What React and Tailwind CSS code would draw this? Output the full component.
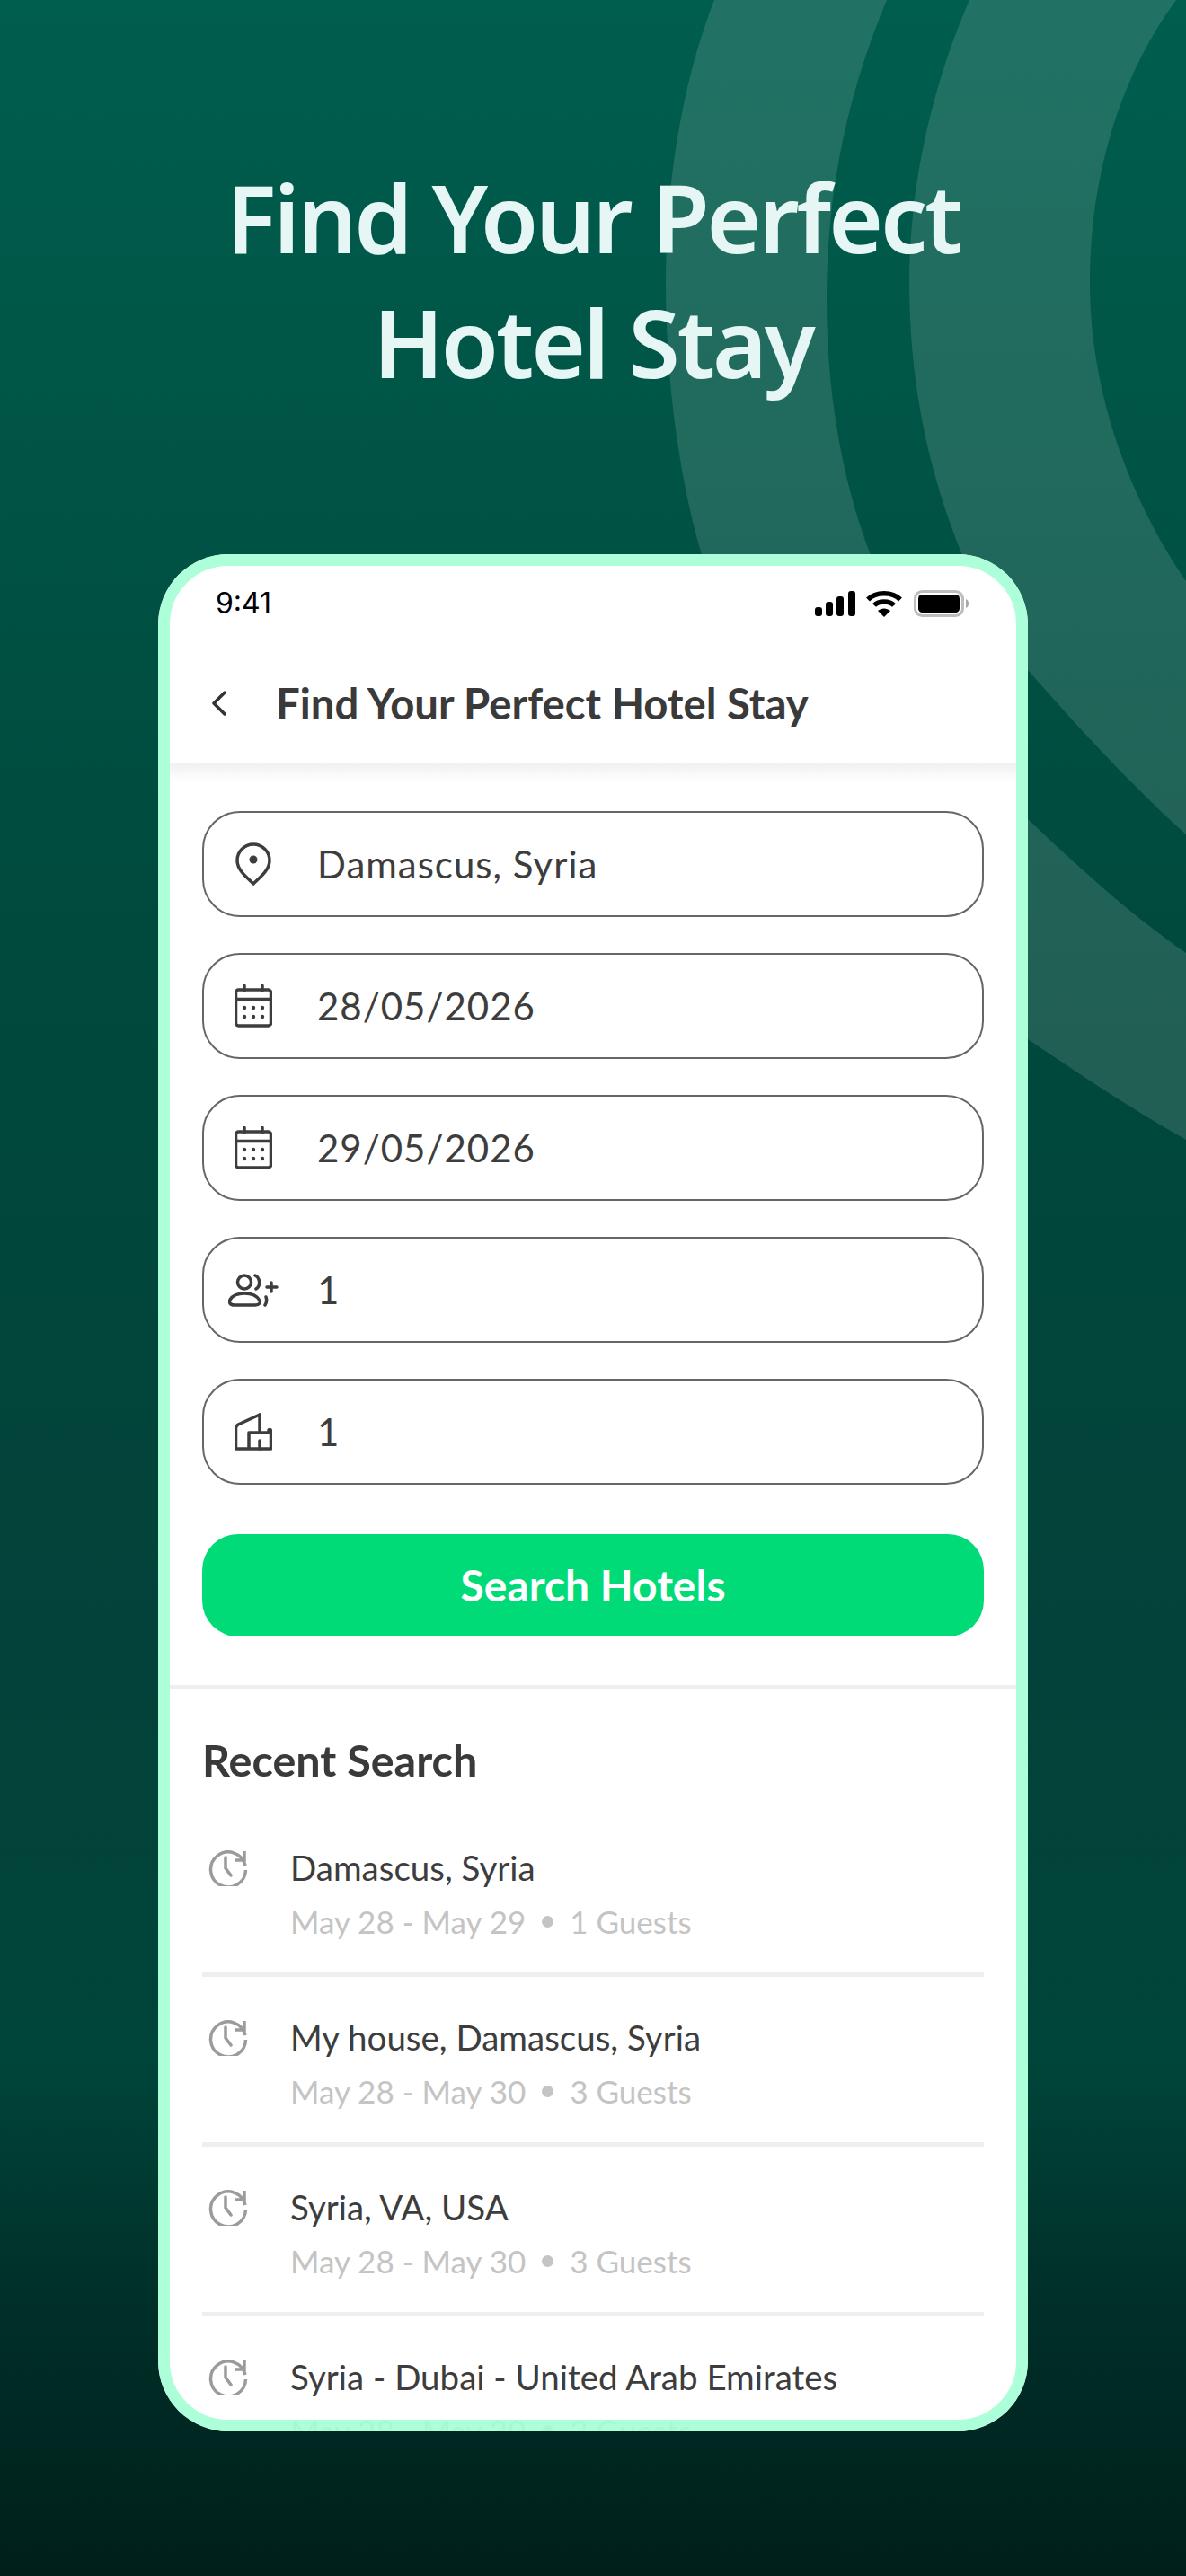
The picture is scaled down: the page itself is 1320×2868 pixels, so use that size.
const fields = [
  { icon: "pin", value: "Damascus, Syria" },
  { icon: "calendar", value: "28/05/2026" },
  { icon: "calendar", value: "29/05/2026" },
  { icon: "guests", value: "1" },
  { icon: "rooms", value: "1" },
];

const recent = [
  { title: "Damascus, Syria", dates: "May 28 - May 29", guests: "1 Guests" },
  { title: "My house, Damascus, Syria", dates: "May 28 - May 30", guests: "3 Guests" },
  { title: "Syria, VA, USA", dates: "May 28 - May 30", guests: "3 Guests" },
  { title: "Syria - Dubai - United Arab Emirates", dates: "May 28 - May 30", guests: "3 Guests" },
];

function FieldIcon({ type }) {
  if (type === "pin") {
    return (
      <svg width="40" height="48" viewBox="0 0 40 48" fill="none" stroke="#3d3d3d" strokeWidth="3.5">
        <path d="M20 46 C13 39 2 31 2 20 A18 18 0 0 1 38 20 C38 31 27 39 20 46 Z" strokeLinejoin="round" />
        <circle cx="20" cy="19" r="4.5" fill="#3d3d3d" stroke="none" />
      </svg>
    );
  }
  if (type === "calendar") {
    return (
      <svg width="42" height="48" viewBox="0 0 42 48" fill="none" stroke="#3d3d3d" strokeWidth="3.5" strokeLinecap="round">
        <rect x="1.5" y="6" width="39" height="40" rx="3" />
        <path d="M1.5 16.5 H40.5 M11 1.5 V7 M31 1.5 V7" />
        <g fill="#3d3d3d" stroke="none">
          <circle cx="11" cy="26" r="2.2" />
          <circle cx="21" cy="26" r="2.2" />
          <circle cx="31" cy="26" r="2.2" />
          <circle cx="11" cy="36" r="2.2" />
          <circle cx="21" cy="36" r="2.2" />
          <circle cx="31" cy="36" r="2.2" />
        </g>
      </svg>
    );
  }
  if (type === "guests") {
    return (
      <svg width="56" height="37" viewBox="0 0 56 37" fill="none" stroke="#3d3d3d" strokeWidth="3.5" strokeLinecap="round">
        <circle cx="18" cy="9.5" r="7.5" />
        <path d="M7 35 H30 C35 35 36 32 35 30 C32 24 25 22 18 22 C11 22 5 24 2 29 C0.5 32 2 35 7 35 Z" />
        <path d="M30 2 C36 5 36 14 31 17 M42 26 C43 29 43 32 41 35" />
        <path d="M48 10 V20 M43 15 H54" />
      </svg>
    );
  }
  return (
    <svg width="42" height="42" viewBox="0 0 42 42" fill="none" stroke="#3d3d3d" strokeWidth="3.5" strokeLinejoin="round" strokeLinecap="round">
      <path d="M28 2 L4 13 C2.5 14 1.5 15 1.5 17 V40 H40.5 V20 C40.5 18 38 18 38 20 V22 H16 V40" />
      <path d="M28 2 V21 M28 40 V31" />
    </svg>
  );
}

function HistoryIcon() {
  return (
    <svg width="44" height="42" viewBox="0 0 44 42" fill="none" stroke="#9b9b9b" strokeWidth="3.5">
      <path d="M41 19 A19.5 19.5 0 1 0 41.5 24 M40 3 V13 H30" />
      <path d="M21 12 V24 L27 32" strokeLinecap="round" transform="translate(-2 -2)" />
    </svg>
  );
}

function StatusIcons() {
  return (
    <div className="flex items-center">
      <svg width="45" height="28" viewBox="0 0 45 28" fill="#000">
        <rect x="0" y="18" width="8" height="10" rx="3" />
        <rect x="12" y="12" width="8" height="16" rx="3" />
        <rect x="24" y="6" width="8" height="22" rx="3" />
        <rect x="37" y="0" width="8" height="28" rx="3" />
      </svg>
      <svg className="ml-[12px]" width="40" height="30" viewBox="0 0 40 30" fill="none" stroke="#000" strokeWidth="5.5">
        <path d="M2 10.5 C11 1.5 29 1.5 38 10.5" />
        <path d="M9 17 C14 11.5 26 11.5 31 17" />
        <path d="M20 30 L13 23 C17 19.5 23 19.5 27 23 Z" fill="#000" stroke="none" />
      </svg>
      <svg className="ml-[13px]" width="62" height="30" viewBox="0 0 62 30">
        <rect x="1.5" y="1.5" width="53" height="27" rx="8" fill="none" stroke="#bdbdbd" strokeWidth="3" />
        <rect x="5" y="5" width="46" height="20" rx="4.5" fill="#000" />
        <path d="M58 10 C62 11 62 19 58 20 Z" fill="#a8a8a8" />
      </svg>
    </div>
  );
}

function App() {
  return (
    <div className="relative h-[2868px] w-[1320px] overflow-hidden bg-[linear-gradient(180deg,#005e4e_0%,#00493c_38%,#03423a_64%,#004539_80%,#00302a_89%,#001f1a_100%)] font-['Lato',sans-serif]">
      {/* Background rings */}
      <svg className="absolute inset-0" width="1320" height="2868" viewBox="0 0 1320 2868" fill="#ffffff" fillOpacity="0.13">
        <path d="M795 0 C760 90 741 200 741 315 C741 420 755 530 781 618 C850 860 1000 1070 1144 1157 C1200 1195 1260 1235 1320 1269 L1320 1061 C1260 1020 1200 965 1144 912 C1050 830 1000 730 969 618 C935 530 920 430 920 332 C920 210 945 100 987 0 Z" />
        <path d="M1079 0 C1040 90 1012 200 1012 315 C1012 430 1035 530 1071 618 C1095 665 1120 710 1144 746 C1200 810 1260 875 1320 929 L1320 647 C1260 560 1213 440 1213 315 C1213 190 1250 80 1309 0 Z" />
      </svg>

      <div className="relative flex flex-col items-center pt-[172px]">
        <h1 className="text-center font-['Noto_Sans',sans-serif] text-[104px] leading-[139px] font-semibold tracking-[-3px] text-[#e6f6f5]">
          Find Your Perfect
          <br />
          Hotel Stay
        </h1>

        {/* Phone frame: sits over the screen, so the last row shows faintly through it */}
        <div className="relative mt-[167px] h-[2090px] w-[968px] overflow-hidden rounded-[78px] bg-white p-[13px]">
          <div className="flex h-full flex-col">
            <div className="flex h-[84px] shrink-0 items-center justify-between pr-[52px] pl-[51px]">
              <span className="font-['Inter',sans-serif] text-[32px] text-black">9:41</span>
              <StatusIcons />
            </div>

            <div className="flex h-[135px] shrink-0 items-center pt-[3px] pl-[46px]">
              <svg width="18" height="28" viewBox="0 0 18 28" fill="none" stroke="#333" strokeWidth="3.5" strokeLinecap="round" strokeLinejoin="round">
                <path d="M15 2 L3 14 L15 26" />
              </svg>
              <span className="ml-[54px] text-[47.3px] font-bold text-[#3a3a3a]">Find Your Perfect Hotel Stay</span>
            </div>

            <div className="h-[21px] shrink-0 bg-[linear-gradient(180deg,#f0f0f0,#ffffff)]"></div>

            <div className="flex shrink-0 flex-col gap-[40px] px-[36px] pt-[33px]">
              {fields.map((field, i) => (
                <div key={i} className="flex h-[118px] items-center rounded-[42px] border-2 border-[#666666]">
                  <div className="flex w-[126px] shrink-0 justify-center pr-[16px]">
                    <FieldIcon type={field.icon} />
                  </div>
                  <span className="text-[42px] tracking-[1px] text-[#3d3d3d]">{field.value}</span>
                </div>
              ))}
            </div>

            <div className="mx-[36px] mt-[55px] flex h-[114px] shrink-0 items-center justify-center rounded-[40px] bg-[#00db78] text-[48px] font-bold text-white">
              Search Hotels
            </div>

            <div className="mt-[54px] h-[5px] shrink-0 bg-[#eeeeee]"></div>

            <div className="px-[36px] pt-[47px]">
              <h2 className="text-[48.5px] leading-[62px] font-bold text-[#3a3a3a]">Recent Search</h2>
              <div className="mt-[59px] flex flex-col">
                {recent.map((item, i) => (
                  <div key={i} className="mb-[37px] flex border-b-[5px] border-[#eeeeee] pb-[27px]">
                    <div className="w-[98px] shrink-0 pt-[9px] pl-[7px]">
                      <HistoryIcon />
                    </div>
                    <div>
                      <div className="text-[38.5px] leading-[60px] text-[#3d3d3d]">{item.title}</div>
                      <div className="flex items-center text-[35px] leading-[60px] text-[#c4c4c4]">
                        {item.dates}
                        <span className="mx-[18px] h-[13px] w-[13px] rounded-full bg-[#c4c4c4]"></span>
                        {item.guests}
                      </div>
                    </div>
                  </div>
                ))}
              </div>
            </div>
          </div>

          <div className="pointer-events-none absolute inset-0 rounded-[78px] border-[13px] border-[#a2ffd4]/88"></div>
        </div>
      </div>
    </div>
  );
}

export default App;
